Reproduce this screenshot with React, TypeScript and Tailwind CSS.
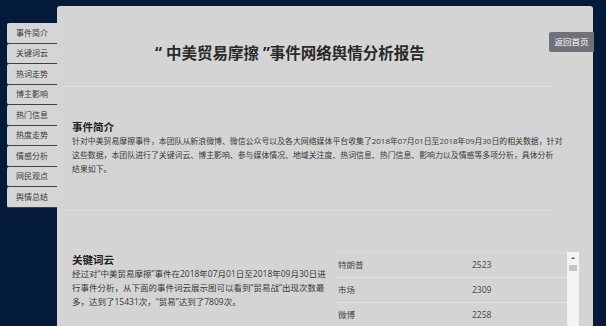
import React from 'react';

const tabs = ['事件简介', '关键词云', '热词走势', '博主影响', '热门信息', '热度走势', '情感分析', '网民观点', '舆情总结'];

const keywords = [
  { word: '特朗普', count: 2523 },
  { word: '市场', count: 2309 },
  { word: '微博', count: 2258 },
];

export default function App() {
  return (
    <div
      className="relative flex h-[326px] w-[606px] overflow-hidden bg-[#031a3b]"
      style={{ fontFamily: '"Open Sans", "Noto Sans CJK SC", sans-serif' }}
    >
      {/* Side tabs */}
      <div className="w-[57px] shrink-0 pl-[7px] pt-[23px]">
        {tabs.map((t) => (
          <div
            key={t}
            className="flex h-[20.5px] items-center justify-center rounded-l-[2px] border-b border-[#3d3f44] bg-[#d5d5d5] text-[8px] text-[#3a3a3a]"
          >
            {t}
          </div>
        ))}
      </div>

      {/* Report panel */}
      <div className="mt-[6px] flex w-[536px] shrink-0 flex-col rounded-t-[3px] bg-[#d4d4d4]">
        <div className="ml-[5px] w-[490px]">
          <div className="h-[81px] border-b border-[#dcdcdc] pl-[93px] pt-[35px]">
            <h1 className="text-[15.5px] font-bold leading-[24px] text-[#2a2a2a]">
              “ 中美贸易摩擦 ”事件网络舆情分析报告
            </h1>
          </div>

          <div className="h-[124px] border-b border-[#dcdcdc] pl-[10px] pt-[33px]">
            <h2 className="text-[10.5px] font-bold leading-[14px] text-[#222]">事件简介</h2>
            <p className="whitespace-nowrap text-[7.9px] leading-[14px] text-[#3a3a3a]">
              针对中美贸易摩擦事件，本团队从新浪微博、微信公众号以及各大网络媒体平台收集了2018年07月01日至2018年09月30日的相关数据，针对
              <br />
              这些数据，本团队进行了关键词云、博主影响、参与媒体情况、地域关注度、热词信息、热门信息、影响力以及情感等多项分析，具体分析
              <br />
              结果如下。
            </p>
          </div>
        </div>

        <div className="ml-[15px] mt-[41px] flex">
          <div className="w-[230px] pt-[1px]">
            <h2 className="text-[10.5px] font-bold leading-[14px] text-[#222]">关键词云</h2>
            <p className="whitespace-nowrap text-[8.5px] leading-[14px] text-[#3a3a3a]">
              经过对“中美贸易摩擦”事件在2018年07月01日至2018年09月30日进
              <br />
              行事件分析，从下面的事件词云展示图可以看到“贸易战”出现次数最
              <br />
              多，达到了15431次，“贸易”达到了7809次。
            </p>
          </div>

          <div className="ml-[34px] flex">
            <div className="w-[231px] border-t border-[#dadada]">
              {keywords.map((k) => (
                <div key={k.word} className="flex h-[25px] items-center border-b border-[#e2e2e2] text-[8.5px] text-[#444]">
                  <span className="w-[136px] pl-[2px]">{k.word}</span>
                  <span>{k.count}</span>
                </div>
              ))}
            </div>
            {/* scrollbar */}
            <div className="flex h-[80px] w-[12px] flex-col items-center bg-[#f3f3f3]">
              <svg width="6" height="8" viewBox="0 0 6 8" className="mt-[2px]">
                <path d="M1 5 L3 3 L5 5 Z" fill="#555" />
              </svg>
              <div className="mt-[3px] h-[6px] w-[8px] bg-[#c4c4c4]" />
            </div>
          </div>
        </div>
      </div>

      {/* Return button */}
      <button className="absolute left-[549px] top-[32px] h-[20px] w-[45px] rounded-l-[2px] bg-[#6f7378] text-[8.5px] text-white">
        返回首页
      </button>
    </div>
  );
}
